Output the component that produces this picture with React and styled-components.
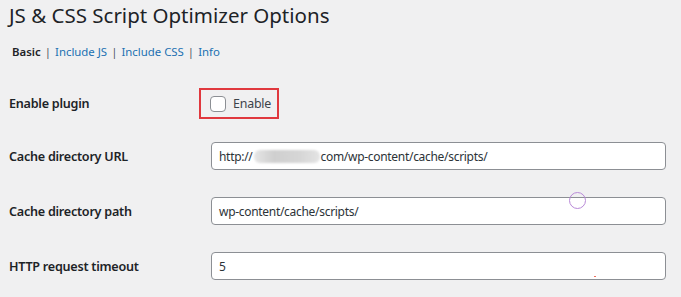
import React from 'react';
import styled, { createGlobalStyle } from 'styled-components';

const GlobalStyle = createGlobalStyle`
  html, body {
    margin: 0;
    padding: 0;
    background: #f0f0f1;
  }
  body {
    font-family: "Noto Sans", "Open Sans", sans-serif;
    color: #1d2327;
  }
`;

const Page = styled.div`
  position: relative;
  width: 681px;
  height: 297px;
  overflow: hidden;
  padding: 1px 15px 0 9px;
  box-sizing: border-box;
`;

const Title = styled.h1`
  margin: 0;
  font-size: 20.5px;
  font-weight: 400;
  line-height: 28px;
`;

const Tabs = styled.ul`
  display: flex;
  align-items: center;
  margin: 14px 0 0 3px;
  padding: 0;
  list-style: none;
  font-size: 11.4px;
  line-height: 17px;
`;

const Tab = styled.li`
  color: ${(p) => (p.current ? '#1d2327' : '#2271b1')};
  font-weight: ${(p) => (p.current ? 600 : 400)};
`;

const Sep = styled.span`
  color: #50575e;
  margin: 0 4px;
`;

const Form = styled.div`
  display: grid;
  grid-template-columns: 202px 1fr;
  margin-top: 19px;
`;

const Label = styled.div`
  display: flex;
  align-items: center;
  font-size: 12.6px;
  font-weight: 600;
  letter-spacing: -0.25px;
  height: ${(p) => p.h}px;
`;

const Field = styled.div`
  display: flex;
  align-items: center;
  height: ${(p) => p.h}px;
`;

const Annotated = styled.div`
  display: flex;
  align-items: center;
  gap: 7px;
  margin-left: -12px;
  padding: 0 6px 0 9px;
  height: 27px;
  border: 2px solid #e0383e;
`;

const Check = styled.span`
  width: 14px;
  height: 14px;
  border: 1px solid #8c8f94;
  border-radius: 4px;
  background: #fff;
`;

const CheckText = styled.span`
  font-size: 12.4px;
  letter-spacing: -0.2px;
  color: #3c434a;
`;

const Input = styled.div`
  flex: 1;
  height: 26px;
  display: flex;
  align-items: center;
  padding: 0 7px;
  background: #fff;
  border: 1px solid #8c8f94;
  border-radius: 4px;
  font-size: 12px;
  letter-spacing: -0.3px;
  color: #2c3338;
  white-space: nowrap;
`;

const Blur = styled.span`
  display: inline-block;
  width: 66px;
  height: 13px;
  margin: 0 1px;
  border-radius: 6px;
  background: linear-gradient(90deg, #e6e6e6, #cfcfcf 30%, #d6d6d6 70%, #e4e4e4);
  filter: blur(1px);
`;

const Ring = styled.span`
  position: absolute;
  left: 569px;
  top: 192px;
  width: 15px;
  height: 15px;
  border: 1px solid #b98ad8;
  border-radius: 50%;
`;

const Dot = styled.span`
  position: absolute;
  left: 594px;
  top: 276px;
  width: 2px;
  height: 1px;
  background: #f07060;
`;

export default function App() {
  return (
    <>
      <GlobalStyle />
      <Page>
        <Title>JS &amp; CSS Script Optimizer Options</Title>
        <Tabs>
          <Tab current>Basic</Tab>
          <Sep>|</Sep>
          <Tab>Include JS</Tab>
          <Sep>|</Sep>
          <Tab>Include CSS</Tab>
          <Sep>|</Sep>
          <Tab>Info</Tab>
        </Tabs>
        <Form>
          <Label h={49}>Enable plugin</Label>
          <Field h={49}>
            <Annotated>
              <Check />
              <CheckText>Enable</CheckText>
            </Annotated>
          </Field>
          <Label h={56}>Cache directory URL</Label>
          <Field h={56}>
            <Input>
              http://<Blur />com/wp-content/cache/scripts/
            </Input>
          </Field>
          <Label h={54}>Cache directory path</Label>
          <Field h={54}>
            <Input>wp-content/cache/scripts/</Input>
          </Field>
          <Label h={56}>HTTP request timeout</Label>
          <Field h={56}>
            <Input>5</Input>
          </Field>
        </Form>
        <Ring />
        <Dot />
      </Page>
    </>
  );
}
